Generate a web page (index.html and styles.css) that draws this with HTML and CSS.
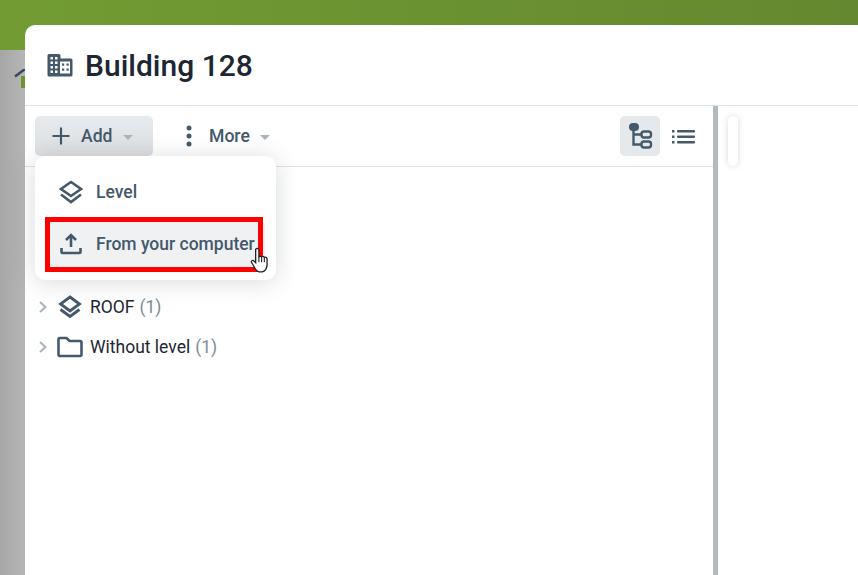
FILE: index.html
```html
<!DOCTYPE html>
<html lang="en">
<head>
  <meta charset="utf-8">
  <title>Building 128</title>
  <link rel="stylesheet" href="styles.css">
</head>
<body>
  <div class="topbar"></div>
  <div class="backdrop">
    <svg class="home-icon" width="30" height="30" viewBox="0 0 30 30"><path d="M1 7.500 L11 0 L21 7.500" fill="none" stroke="#34495e" stroke-width="2.500"/><rect x="7" y="7" width="14" height="12" fill="#6a962f"/></svg>
  </div>

  <div class="modal">
    <header class="modal-head">
      <svg class="building-icon" width="26" height="26" viewBox="0 -1.500 26 26">
        <path d="M0.500 2 Q0.500 0.500 2 0.500 H12 Q13.500 0.500 13.500 2 V5 H24 Q25.500 5 25.500 6.500 V21.500 Q25.500 23 24 23 H2 Q0.500 23 0.500 21.500 Z" fill="#44596b"/>
        <g fill="#fff">
          <rect x="3.500" y="3.500" width="2.500" height="2.500"/><rect x="8" y="3.500" width="2.500" height="2.500"/>
          <rect x="3.500" y="8" width="2.500" height="2.500"/><rect x="8" y="8" width="2.500" height="2.500"/>
          <rect x="3.500" y="12.500" width="2.500" height="2.500"/><rect x="8" y="12.500" width="2.500" height="2.500"/>
          <rect x="3.500" y="17" width="2.500" height="2.500"/><rect x="8" y="17" width="2.500" height="2.500"/>
          <rect x="13" y="8" width="10" height="12"/>
        </g>
        <g fill="#44596b">
          <rect x="15" y="10" width="2.200" height="2.200"/><rect x="19.500" y="10" width="2.200" height="2.200"/>
          <rect x="15" y="15" width="2.200" height="2.200"/><rect x="19.500" y="15" width="2.200" height="2.200"/>
        </g>
      </svg>
      <h1 class="modal-title">Building 128</h1>
    </header>

    <div class="modal-body">
      <section class="left-pane">
        <div class="toolbar">
          <button class="tool-btn tool-btn-active">
            <svg width="20" height="20" viewBox="0 0 20 20"><path d="M10 1.500 V18.500 M1.500 10 H18.500" stroke="#44596b" stroke-width="2.200" fill="none"/></svg>
            <span class="tool-label">Add</span>
            <span class="caret"></span>
          </button>
          <button class="tool-btn tool-btn-more">
            <svg width="6" height="22" viewBox="0 0 6 22"><circle cx="3" cy="3" r="2.500" fill="#44596b"/><circle cx="3" cy="11" r="2.500" fill="#44596b"/><circle cx="3" cy="19" r="2.500" fill="#44596b"/></svg>
            <span class="tool-label">More</span>
            <span class="caret"></span>
          </button>
          <div class="view-switch">
            <button class="view-btn view-btn-active">
              <svg width="26" height="26" viewBox="0 0 26 26" fill="none" stroke="#44596b" stroke-width="2.400">
                <rect x="2" y="0" width="10" height="8" rx="4" fill="#44596b" stroke="none"/>
                <path d="M6.500 7 V21.500 H14.500 M6.500 11.500 H14.500"/>
                <rect x="14.500" y="8.500" width="9.500" height="6" rx="2.500"/>
                <rect x="14.500" y="18.500" width="9.500" height="6" rx="2.500"/>
              </svg>
            </button>
            <button class="view-btn">
              <svg width="24" height="18" viewBox="0 0 24 18" fill="#44596b">
                <rect x="1" y="3" width="2.500" height="2.500"/><rect x="6" y="3" width="18" height="2.500" rx="1"/>
                <rect x="1" y="8.500" width="2.500" height="2.500"/><rect x="6" y="8.500" width="18" height="2.500" rx="1"/>
                <rect x="1" y="14" width="2.500" height="2.500"/><rect x="6" y="14" width="18" height="2.500" rx="1"/>
              </svg>
            </button>
          </div>
        </div>

        <ul class="tree">
          <li class="tree-row">
            <svg class="chevron" width="10" height="14" viewBox="0 0 10 14"><path d="M2 2 L7.500 7 L2 12" fill="none" stroke="#a9b3ba" stroke-width="2"/></svg>
            <svg class="tree-icon" width="26" height="26" viewBox="0 0 26 26" fill="none" stroke="#44596b" stroke-width="2.800"><path d="M13 3 L22.500 10 L13 17 L3.500 10 Z"/><path d="M3.500 15.500 L13 22.500 L22.500 15.500"/></svg>
            <span class="tree-name">ROOF</span>
            <span class="tree-count">(1)</span>
          </li>
          <li class="tree-row">
            <svg class="chevron" width="10" height="14" viewBox="0 0 10 14"><path d="M2 2 L7.500 7 L2 12" fill="none" stroke="#a9b3ba" stroke-width="2"/></svg>
            <svg class="tree-icon" width="26" height="22" viewBox="0 0 26 22" fill="none" stroke="#44596b" stroke-width="2.600"><path d="M1.500 3.500 Q1.500 2 3 2 H9.500 L12.500 5 H23 Q24.500 5 24.500 6.500 V18.500 Q24.500 20 23 20 H3 Q1.500 20 1.500 18.500 Z"/></svg>
            <span class="tree-name">Without level</span>
            <span class="tree-count">(1)</span>
          </li>
        </ul>

        <div class="menu">
          <div class="menu-item">
            <svg width="24" height="24" viewBox="0 0 24 24" fill="none" stroke="#44596b" stroke-width="2.600"><path d="M12 2 L22 9 L12 16 L2 9 Z"/><path d="M2 14.500 L12 22 L22 14.500"/></svg>
            <span>Level</span>
          </div>
          <div class="menu-item menu-item-hover">
            <svg width="24" height="24" viewBox="0 0 24 24" fill="none" stroke="#44596b" stroke-width="2.600"><path d="M12 15 V3 M7 8 L12 3 L17 8"/><path d="M2.500 16 V20 Q2.500 21 3.500 21 H20.500 Q21.500 21 21.500 20 V16"/></svg>
            <span>From your computer</span>
          </div>
          <div class="highlight"></div>
          <svg class="hand-cursor" width="20" height="26" viewBox="0 0 18 24"><path d="M5 2 Q6.500 0.500 8 2 V9 Q9.500 8 10.500 9 Q12 8 13 9.500 Q15 9 15.500 11 V17 Q15 22 11 23 H8 Q5 22 3.500 18 L1 14 Q1 12 3 12.500 L5 14.500 Z" fill="#fff" stroke="#222" stroke-width="1.200"/><path d="M8 9 V14 M10.500 9 V14 M13 10 V14" stroke="#222" stroke-width="1" fill="none"/></svg>
        </div>
      </section>

      <div class="divider"></div>

      <aside class="right-pane">
        <div class="scroll-thumb"></div>
      </aside>
    </div>
  </div>
</body>
</html>
```

FILE: styles.css
```css
:root {
  --slate: #44596b;
  --ink: #1c2733;
  --line: #dfe2e4;
}

html, body {
  height: 100%;
}

body {
  margin: 0;
  overflow: hidden;
  background: #fff;
  font-family: Roboto, "Liberation Sans", sans-serif;
}

.topbar {
  height: 50px;
  background: linear-gradient(90deg, #729c33, #64882f);
}

.backdrop {
  height: 525px;
  padding: 19px 0 0 14px;
  box-sizing: border-box;
  background: linear-gradient(90deg, #a6a6a6, #b6b6b6 25px);
}

.home-icon {
  display: block;
}

.modal {
  position: absolute;
  top: 25px;
  left: 25px;
  right: 0;
  bottom: 0;
  display: flex;
  flex-direction: column;
  background: #fff;
  border-radius: 10px 0 0 0;
}

.modal-head {
  display: flex;
  align-items: center;
  gap: 12px;
  height: 81px;
  padding-left: 22px;
  box-sizing: border-box;
  border-bottom: 1px solid var(--line);
}

.building-icon {
  flex: none;
}

.modal-title {
  margin: 0;
  color: var(--ink);
  font-size: 30px;
  font-weight: 500;
}

.modal-body {
  flex: 1;
  display: flex;
  min-height: 0;
}

.left-pane {
  position: relative;
  width: 688px;
}

.toolbar {
  display: flex;
  align-items: center;
  height: 61px;
  padding: 0 10px;
  box-sizing: border-box;
  border-bottom: 1px solid var(--line);
}

button {
  border: 0;
  padding: 0;
  background: transparent;
  font: inherit;
}

.tool-btn {
  display: flex;
  align-items: center;
  height: 40px;
  border-radius: 5px;
  color: var(--slate);
}

.tool-btn-active {
  width: 118px;
  padding-left: 16px;
  box-sizing: border-box;
  background: linear-gradient(#e8ebed, #dcdfe1);
}

.tool-btn-active svg {
  margin-right: 10px;
}

.tool-btn-more {
  margin-left: 33px;
}

.tool-btn-more svg {
  margin-right: 17px;
}

.tool-label {
  font-size: 17.6px;
  font-weight: 500;
}

.caret {
  width: 0;
  height: 0;
  margin-left: 10px;
  margin-top: 2px;
  border-left: 5px solid transparent;
  border-right: 5px solid transparent;
  border-top: 5px solid #aab4bb;
}

.view-switch {
  display: flex;
  gap: 3px;
  margin-left: auto;
}

.view-btn {
  display: flex;
  align-items: center;
  justify-content: center;
  width: 40px;
  height: 40px;
  border-radius: 5px;
}

.view-btn-active {
  background: #e6e9eb;
}

.tree {
  margin: 0;
  padding: 120px 0 0 13px;
  list-style: none;
}

.tree-row {
  display: flex;
  align-items: center;
  height: 40px;
  font-size: 17.5px;
  color: var(--ink);
}

.chevron {
  margin-right: 9px;
}

.tree-icon {
  width: 26px;
  margin-right: 7px;
}

.tree-count {
  margin-left: 5px;
  color: #7d8c98;
}

.menu {
  position: absolute;
  top: 50px;
  left: 10px;
  width: 241px;
  height: 124px;
  padding: 13px 11px 0;
  box-sizing: border-box;
  display: flex;
  flex-direction: column;
  gap: 6px;
  background: #fff;
  border-radius: 10px;
  box-shadow: 0 2px 24px rgba(40, 50, 60, 0.18);
}

.menu-item {
  display: flex;
  align-items: center;
  gap: 13px;
  height: 46px;
  padding-left: 13px;
  color: var(--slate);
  font-size: 17.5px;
  font-weight: 500;
  white-space: nowrap;
}

.menu-item-hover {
  background: #eff1f3;
  border-radius: 5px;
}

.highlight {
  position: absolute;
  top: 61px;
  left: 10px;
  width: 218px;
  height: 55px;
  box-sizing: border-box;
  border: 5px solid #ff0000;
}

.hand-cursor {
  position: absolute;
  top: 91px;
  left: 215px;
}

.divider {
  width: 5px;
  background: #b2babf;
}

.right-pane {
  flex: 1;
  padding: 10px 0 0 10px;
}

.scroll-thumb {
  width: 10px;
  height: 50px;
  background: #fff;
  border-radius: 5px;
  box-shadow: 0 0 6px rgba(40, 50, 60, 0.18);
}
```
